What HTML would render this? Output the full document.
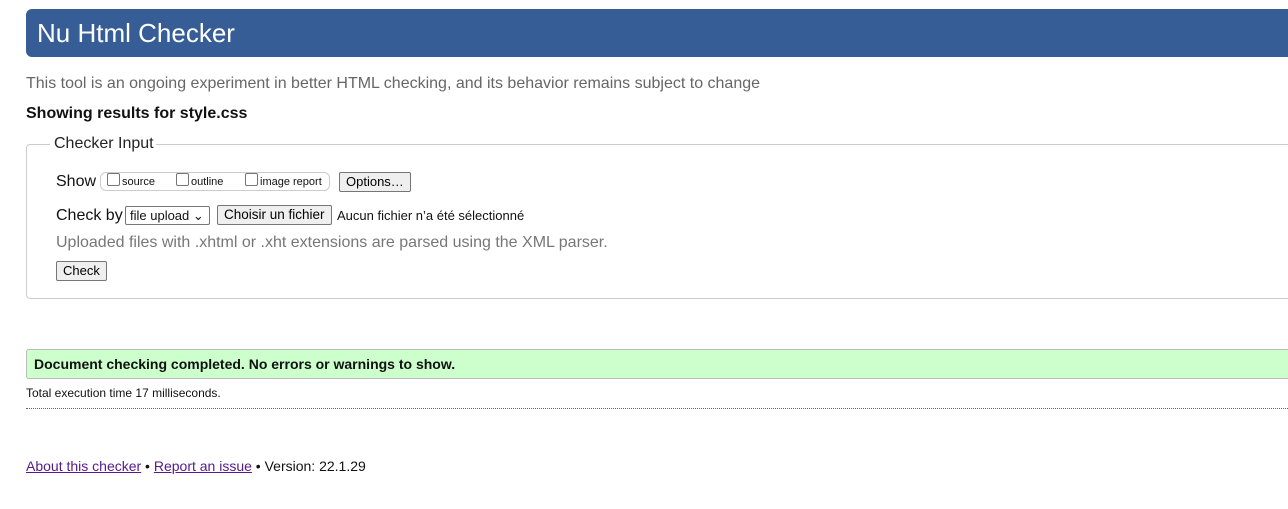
<!DOCTYPE html>
<html><head><meta charset="utf-8"><style>
body{margin:0;width:1288px;height:509px;overflow:hidden;background:#fff;font-family:"Liberation Sans",Arial,sans-serif;color:#111;position:relative}
.a{position:absolute;white-space:nowrap}
.hdr{left:26px;top:9px;width:1300px;height:48px;background:#365d95;border-radius:6px}
.btn{position:absolute;background:#efefef;border:1px solid #767676;border-radius:2px;font-size:13px;padding:0 6px;line-height:18px;color:#000}
.cb{display:inline-block;width:11px;height:11px;border:1px solid #767676;border-radius:2px;vertical-align:-1px;margin-right:2px}
a{color:#551a8b}
</style></head><body>
<div class="a hdr"></div>
<div class="a" style="left:37px;top:18px;font-size:26px;color:#fff">Nu Html Checker</div>
<div class="a" style="left:26px;top:75px;font-size:16px;color:#666">This tool is an ongoing experiment in better HTML checking, and its behavior remains subject to change</div>
<div class="a" style="left:26px;top:105px;font-size:16px;font-weight:bold">Showing results for style.css</div>
<div class="a" style="left:26px;top:144px;width:1300px;height:153px;border:1px solid #ccc;border-radius:4px"></div>
<div class="a" style="left:50px;top:135px;font-size:16px;background:#fff;padding:0 2px 0 4px;color:#222">Checker Input</div>
<div class="a" style="left:56px;top:173px;font-size:16px">Show</div>
<div class="a" style="left:100px;top:172px;width:228px;height:17px;border:1px solid #ccc;border-radius:6px;font-size:11px;line-height:18px">
<span style="position:absolute;left:6px"><span class="cb"></span>source</span>
<span style="position:absolute;left:75px"><span class="cb"></span>outline</span>
<span style="position:absolute;left:144px"><span class="cb"></span>image report</span></div>
<div class="btn" style="left:339px;top:172px">Options…</div>
<div class="a" style="left:56px;top:207px;font-size:16px">Check by</div>
<div class="a" style="left:125px;top:206px;border:1px solid #767676;border-radius:2px;font-size:13px;line-height:17px;padding-left:4px;box-sizing:border-box;width:85px;height:19px">file upload ⌄</div>
<div class="btn" style="left:217px;top:205px;font-size:13.5px">Choisir un fichier</div>
<div class="a" style="left:337px;top:208px;font-size:13px">Aucun fichier n’a été sélectionné</div>
<div class="a" style="left:56px;top:234px;font-size:16px;color:#777">Uploaded files with .xhtml or .xht extensions are parsed using the XML parser.</div>
<div class="btn" style="left:56px;top:261px">Check</div>
<div class="a" style="left:26px;top:349px;width:1300px;height:28px;background:#ccffcc;border:1px solid #bbb;border-radius:3px"></div>
<div class="a" style="left:34px;top:356px;font-size:14px;font-weight:bold">Document checking completed. No errors or warnings to show.</div>
<div class="a" style="left:26px;top:386px;font-size:12px">Total execution time 17 milliseconds.</div>
<div class="a" style="left:26px;top:408px;width:1300px;border-top:1px dotted #666"></div>
<div class="a" style="left:26px;top:458px;font-size:14px"><a href="#">About this checker</a> • <a href="#">Report an issue</a> • Version: 22.1.29</div>
</body></html>
